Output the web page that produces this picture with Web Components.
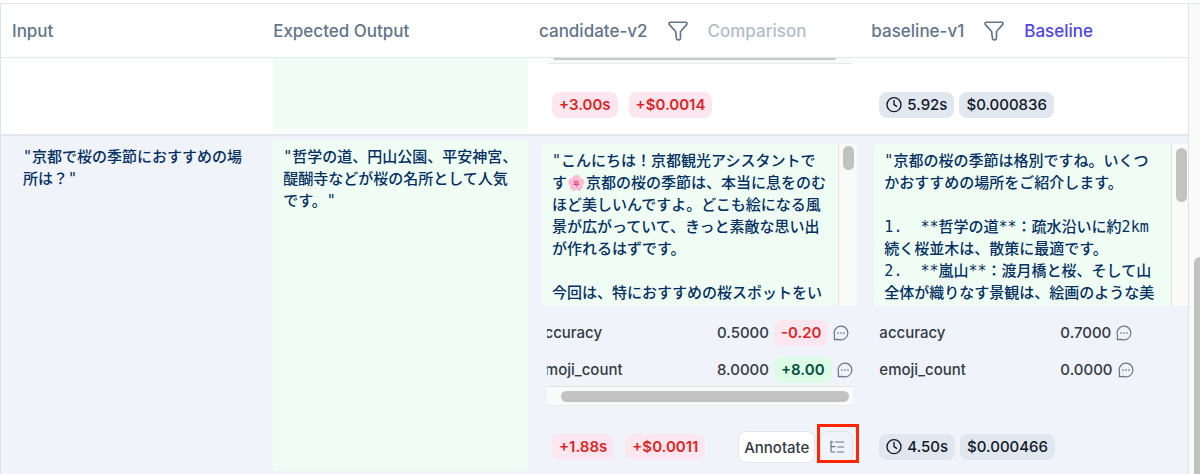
<!DOCTYPE html>
<html lang="ja">
<head>
<meta charset="utf-8">
<meta name="viewport" content="width=device-width, initial-scale=1">
<title>Experiment comparison</title>
<style>
  body {
    margin: 0;
    font-family: Inter, "Noto Sans CJK JP", sans-serif;
    background: #fff;
  }
</style>
</head>
<body>
<experiment-table></experiment-table>

<script>
class UiIcon extends HTMLElement {
  static shapes = {
    filter: '<path d="M3.2 2.500h17.600a.9.9 0 0 1 .9.9v.6a2 2 0 0 1-.5 1.300l-6 6.700a2 2 0 0 0-.5 1.300V20a1.600 1.600 0 0 1-1.600 1.600h-1.200A1.600 1.600 0 0 1 10.300 20l-.8-6.700a2 2 0 0 0-.5-1.300L2.800 5.300a2 2 0 0 1-.5-1.300v-.6a.9.9 0 0 1 .9-.9z"/>',
    clock: '<circle cx="12" cy="11.500" r="10.500"/><path d="M12 5v6.500l4 2.500"/>',
    comment: '<path d="M2 22l.3-6.500A10.300 10.300 0 1 1 8 21.500z"/><path d="M7.500 12h.01M12 12h.01M16.500 12h.01" stroke-width="2.600"/>',
    tree: '<path d="M22 12h-9M22 4.500H10M22 19.500h-9M3 3v14.500a2 2 0 0 0 2 2h4M3 9.500a2 2 0 0 0 2 2h4M3 4.500h3"/>',
  };

  constructor() {
    super();
    this.attachShadow({ mode: 'open' });
  }

  connectedCallback() {
    this.shadowRoot.innerHTML = `
      <style>
        :host { display: inline-flex; width: 16px; height: 16px; flex: none; }
        svg {
          width: 100%;
          height: 100%;
          fill: none;
          stroke: currentColor;
          stroke-width: var(--stroke, 1.8);
          stroke-linecap: round;
          stroke-linejoin: round;
        }
      </style>
      <svg viewBox="0 0 24 24" aria-hidden="true">${UiIcon.shapes[this.getAttribute('name')]}</svg>
    `;
  }
}

class MetricChip extends HTMLElement {
  constructor() {
    super();
    this.attachShadow({ mode: 'open' });
    this.shadowRoot.innerHTML = `
      <style>
        :host {
          display: inline-flex;
          align-items: center;
          gap: 5px;
          box-sizing: border-box;
          height: 26px;
          padding: 0 7px;
          border-radius: 8px;
          font-size: 15px;
          line-height: 20px;
          font-weight: 500;
          white-space: nowrap;
          background: #e0e7ef;
          color: #0f172a;
        }
        :host([tone="worse"]) { background: #fce7f1; color: #dc2626; font-weight: 600; }
        :host([tone="better"]) { background: #dcfce7; color: #064e3b; font-weight: 600; }
      </style>
      <slot></slot>
    `;
  }
}

class OutputBox extends HTMLElement {
  constructor() {
    super();
    this.attachShadow({ mode: 'open' });
    this.shadowRoot.innerHTML = `
      <style>
        :host { display: flex; height: 162px; overflow: hidden; }
        .text {
          flex: 1;
          padding: 6px 9px 0 10px;
          overflow: hidden;
          background: #f0fdf4;
          border-top-left-radius: 4px;
        }
        .track {
          flex: none;
          box-sizing: border-box;
          width: var(--track-width, 17px);
          padding: var(--thumb-top, 2px) 4px 0;
          background: #fafafa;
          border-left: 1px solid #e2e2e2;
        }
        .thumb {
          width: 11px;
          height: var(--thumb-height, 24px);
          border-radius: 6px;
          background: #c2c2c2;
        }
      </style>
      <div class="text"><slot></slot></div>
      <div class="track"><div class="thumb"></div></div>
    `;
  }
}

class CodeText extends HTMLElement {
  constructor() {
    super();
    this.attachShadow({ mode: 'open' });
    this.shadowRoot.innerHTML = `
      <style>
        :host {
          display: block;
          font: 500 15px/22px "DejaVu Sans Mono", "Noto Sans CJK JP", monospace;
          color: #032f62;
        }
        div {
          white-space: pre-wrap;
          overflow-wrap: anywhere;
        }
      </style>
      <div><slot></slot></div>
    `;
  }
}

class ScoreRow extends HTMLElement {
  constructor() {
    super();
    this.attachShadow({ mode: 'open' });
    this.shadowRoot.innerHTML = `
      <style>
        :host {
          display: flex;
          align-items: center;
          gap: 5px;
          height: 26px;
          font-size: 15px;
          line-height: 20px;
          font-weight: 500;
          color: #333a45;
        }
        .name { flex: 0 0 176px; }
        ui-icon { color: #64748b; }
      </style>
      <span class="name"></span>
      <span class="value"></span>
      <slot></slot>
      <ui-icon name="comment"></ui-icon>
    `;
  }

  connectedCallback() {
    this.shadowRoot.querySelector('.name').textContent = this.getAttribute('name');
    this.shadowRoot.querySelector('.value').textContent = this.getAttribute('value');
  }
}

class ScorePane extends HTMLElement {
  constructor() {
    super();
    this.attachShadow({ mode: 'open' });
    this.shadowRoot.innerHTML = `
      <style>
        :host { display: block; overflow: hidden; }
        .rows { display: grid; gap: 11px; padding: 14px 0 3px; }
        .track { display: none; }
        :host([scrolled]) .rows { margin-left: -11px; }
        :host([scrolled]) .track {
          display: block;
          padding: 4px 4px 3px 14px;
          background: #fafafa;
          border-top: 1px solid #e2e2e2;
          border-bottom: 1px solid #ebebeb;
        }
        .thumb { height: 11px; border-radius: 6px; background: #c2c2c2; }
      </style>
      <div class="rows"><slot></slot></div>
      <div class="track"><div class="thumb"></div></div>
    `;
  }
}

class RunActions extends HTMLElement {
  constructor() {
    super();
    this.attachShadow({ mode: 'open' });
    this.shadowRoot.innerHTML = `
      <style>
        :host { display: flex; gap: 5px; margin-left: auto; }
        button {
          box-sizing: border-box;
          height: 32px;
          padding: 0 5px;
          border: 1px solid #dfe6ef;
          border-radius: 8px;
          background: #fff;
          font: 500 15px Inter, sans-serif;
          color: #333a45;
        }
        .trace {
          display: flex;
          align-items: center;
          justify-content: center;
          width: 33px;
          background: transparent;
          color: #64748b;
        }
        .highlight { position: relative; }
        .highlight::after {
          content: "";
          position: absolute;
          inset: -7px -6px 0 -3px;
          border: 3px solid #ff2600;
          pointer-events: none;
        }
      </style>
      <button type="button">Annotate</button>
      <span class="highlight">
        <button type="button" class="trace" aria-label="Trace"><ui-icon name="tree"></ui-icon></button>
      </span>
    `;
  }
}

class ExperimentTable extends HTMLElement {
  constructor() {
    super();
    this.attachShadow({ mode: 'open' });
  }

  connectedCallback() {
    this.render();
  }

  render() {
    this.shadowRoot.innerHTML = `
      <style>
        :host {
          display: flex;
          margin-top: 3px;
          border-top: 1px solid #e2e8f0;
          border-left: 1px solid #dbe4ee;
          overflow: hidden;
        }
        table {
          flex: 1;
          width: 100%;
          table-layout: fixed;
          border-spacing: 0;
        }
        th {
          height: 53px;
          padding: 0 0 0 11px;
          border-bottom: 1px solid #e2e8f0;
          text-align: left;
          font-size: 17px;
          font-weight: 500;
          color: #64748b;
        }
        .run { display: flex; align-items: center; gap: 19px; }
        .run ui-icon { width: 22px; height: 22px; }
        .muted { color: #b3bcc9; }
        .baseline { color: #4f46e5; }
        td { padding: 0; vertical-align: top; }
        .previous td { height: 71px; padding-bottom: 5px; border-bottom: 2px solid #e2e8f0; }
        .current { background: #f0f3f9; }
        .current .input { padding: 10px 10px 0 22px; }
        td.expected-cell { padding-left: 11px; }
        .expected { height: 71px; background: #f0fdf4; }
        .current .expected {
          box-sizing: border-box;
          height: 330px;
          margin: 5px 0 3px;
          padding: 5px 10px;
        }
        .current .candidate-cell { padding: 8px 3px 12px 14px; }
        .current .baseline-cell { padding: 8px 0 12px 14px; }
        .footer { display: flex; align-items: center; height: 32px; gap: 11px; }
        .candidate-cell .footer { padding: 0 4px 0 10px; }
        .candidate-cell score-pane { margin: 0 4px 0 5px; }
        .candidate-cell output-box { --track-width: 19px; }
        .baseline-cell .footer { padding-left: 5px; gap: 5px; }
        .baseline-cell score-pane { margin-left: 5px; }
        .baseline-cell output-box { --thumb-top: 4px; --thumb-height: 54px; }
        .baseline-cell metric-chip ui-icon { --stroke: 2; }
        .current .candidate-cell .footer { margin-top: 25px; }
        .current .baseline-cell .footer { margin-top: 45px; }
        .previous .candidate-cell { padding-left: 14px; }
        .previous .baseline-cell { padding-left: 14px; }
        .previous .baseline-cell .footer { margin-top: 31px; }
        .previous .candidate-cell .footer { margin-top: 25px; }
        .track-end {
          height: 5px;
          margin: 0 7px 0 5px;
          padding: 0 17px 0 6px;
          background: #fafafa;
          border-bottom: 1px solid #ebebeb;
        }
        .track-end div {
          height: 2px;
          border-radius: 0 0 6px 6px;
          background: #c8c8c8;
        }
        .page-track {
          flex: none;
          box-sizing: border-box;
          width: 12px;
          padding: 253px 0 0 5px;
          background: #fafafa;
          border-left: 1px solid #e2e2e2;
        }
        .page-thumb { height: 100%; border-top-left-radius: 6px; background: #c2c2c2; }
      </style>
      <table>
        <colgroup>
          <col style="width: 22%"><col style="width: 22.4%"><col style="width: 28%"><col>
        </colgroup>
        <thead>
          <tr>
            <th>Input</th>
            <th>Expected Output</th>
            <th><div class="run"><span>candidate-v2</span><ui-icon name="filter"></ui-icon><span class="muted">Comparison</span></div></th>
            <th><div class="run"><span>baseline-v1</span><ui-icon name="filter"></ui-icon><span class="baseline">Baseline</span></div></th>
          </tr>
        </thead>
        <tbody>
          <tr class="previous">
            <td></td>
            <td class="expected-cell"><div class="expected"></div></td>
            <td class="candidate-cell">
              <div class="track-end"><div></div></div>
              <div class="footer">
                <metric-chip tone="worse">+3.00s</metric-chip>
                <metric-chip tone="worse">+$0.0014</metric-chip>
              </div>
            </td>
            <td class="baseline-cell">
              <div class="footer">
                <metric-chip><ui-icon name="clock"></ui-icon>5.92s</metric-chip>
                <metric-chip>$0.000836</metric-chip>
              </div>
            </td>
          </tr>
          <tr class="current">
            <td class="input"><code-text>"京都で桜の季節におすすめの場所は？"</code-text></td>
            <td class="expected-cell"><div class="expected"><code-text>"哲学の道、円山公園、平安神宮、醍醐寺などが桜の名所として人気です。"</code-text></div></td>
            <td class="candidate-cell">
              <output-box><code-text>"こんにちは！京都観光アシスタントです🌸京都の桜の季節は、本当に息をのむほど美しいんですよ。どこも絵になる風景が広がっていて、きっと素敵な思い出が作れるはずです。

今回は、特におすすめの桜スポットをい</code-text></output-box>
              <score-pane scrolled>
                <score-row name="accuracy" value="0.5000"><metric-chip tone="worse">-0.20</metric-chip></score-row>
                <score-row name="emoji_count" value="8.0000"><metric-chip tone="better">+8.00</metric-chip></score-row>
              </score-pane>
              <div class="footer">
                <metric-chip tone="worse">+1.88s</metric-chip>
                <metric-chip tone="worse">+$0.0011</metric-chip>
                <run-actions></run-actions>
              </div>
            </td>
            <td class="baseline-cell">
              <output-box><code-text>"京都の桜の季節は格別ですね。いくつかおすすめの場所をご紹介します。

1.  **哲学の道**：疏水沿いに約2km続く桜並木は、散策に最適です。
2.  **嵐山**：渡月橋と桜、そして山全体が織りなす景観は、絵画のような美</code-text></output-box>
              <score-pane>
                <score-row name="accuracy" value="0.7000"></score-row>
                <score-row name="emoji_count" value="0.0000"></score-row>
              </score-pane>
              <div class="footer">
                <metric-chip><ui-icon name="clock"></ui-icon>4.50s</metric-chip>
                <metric-chip>$0.000466</metric-chip>
              </div>
            </td>
          </tr>
        </tbody>
      </table>
      <div class="page-track"><div class="page-thumb"></div></div>
    `;
  }
}

customElements.define('ui-icon', UiIcon);
customElements.define('metric-chip', MetricChip);
customElements.define('output-box', OutputBox);
customElements.define('code-text', CodeText);
customElements.define('score-row', ScoreRow);
customElements.define('score-pane', ScorePane);
customElements.define('run-actions', RunActions);
customElements.define('experiment-table', ExperimentTable);
</script>
</body>
</html>
